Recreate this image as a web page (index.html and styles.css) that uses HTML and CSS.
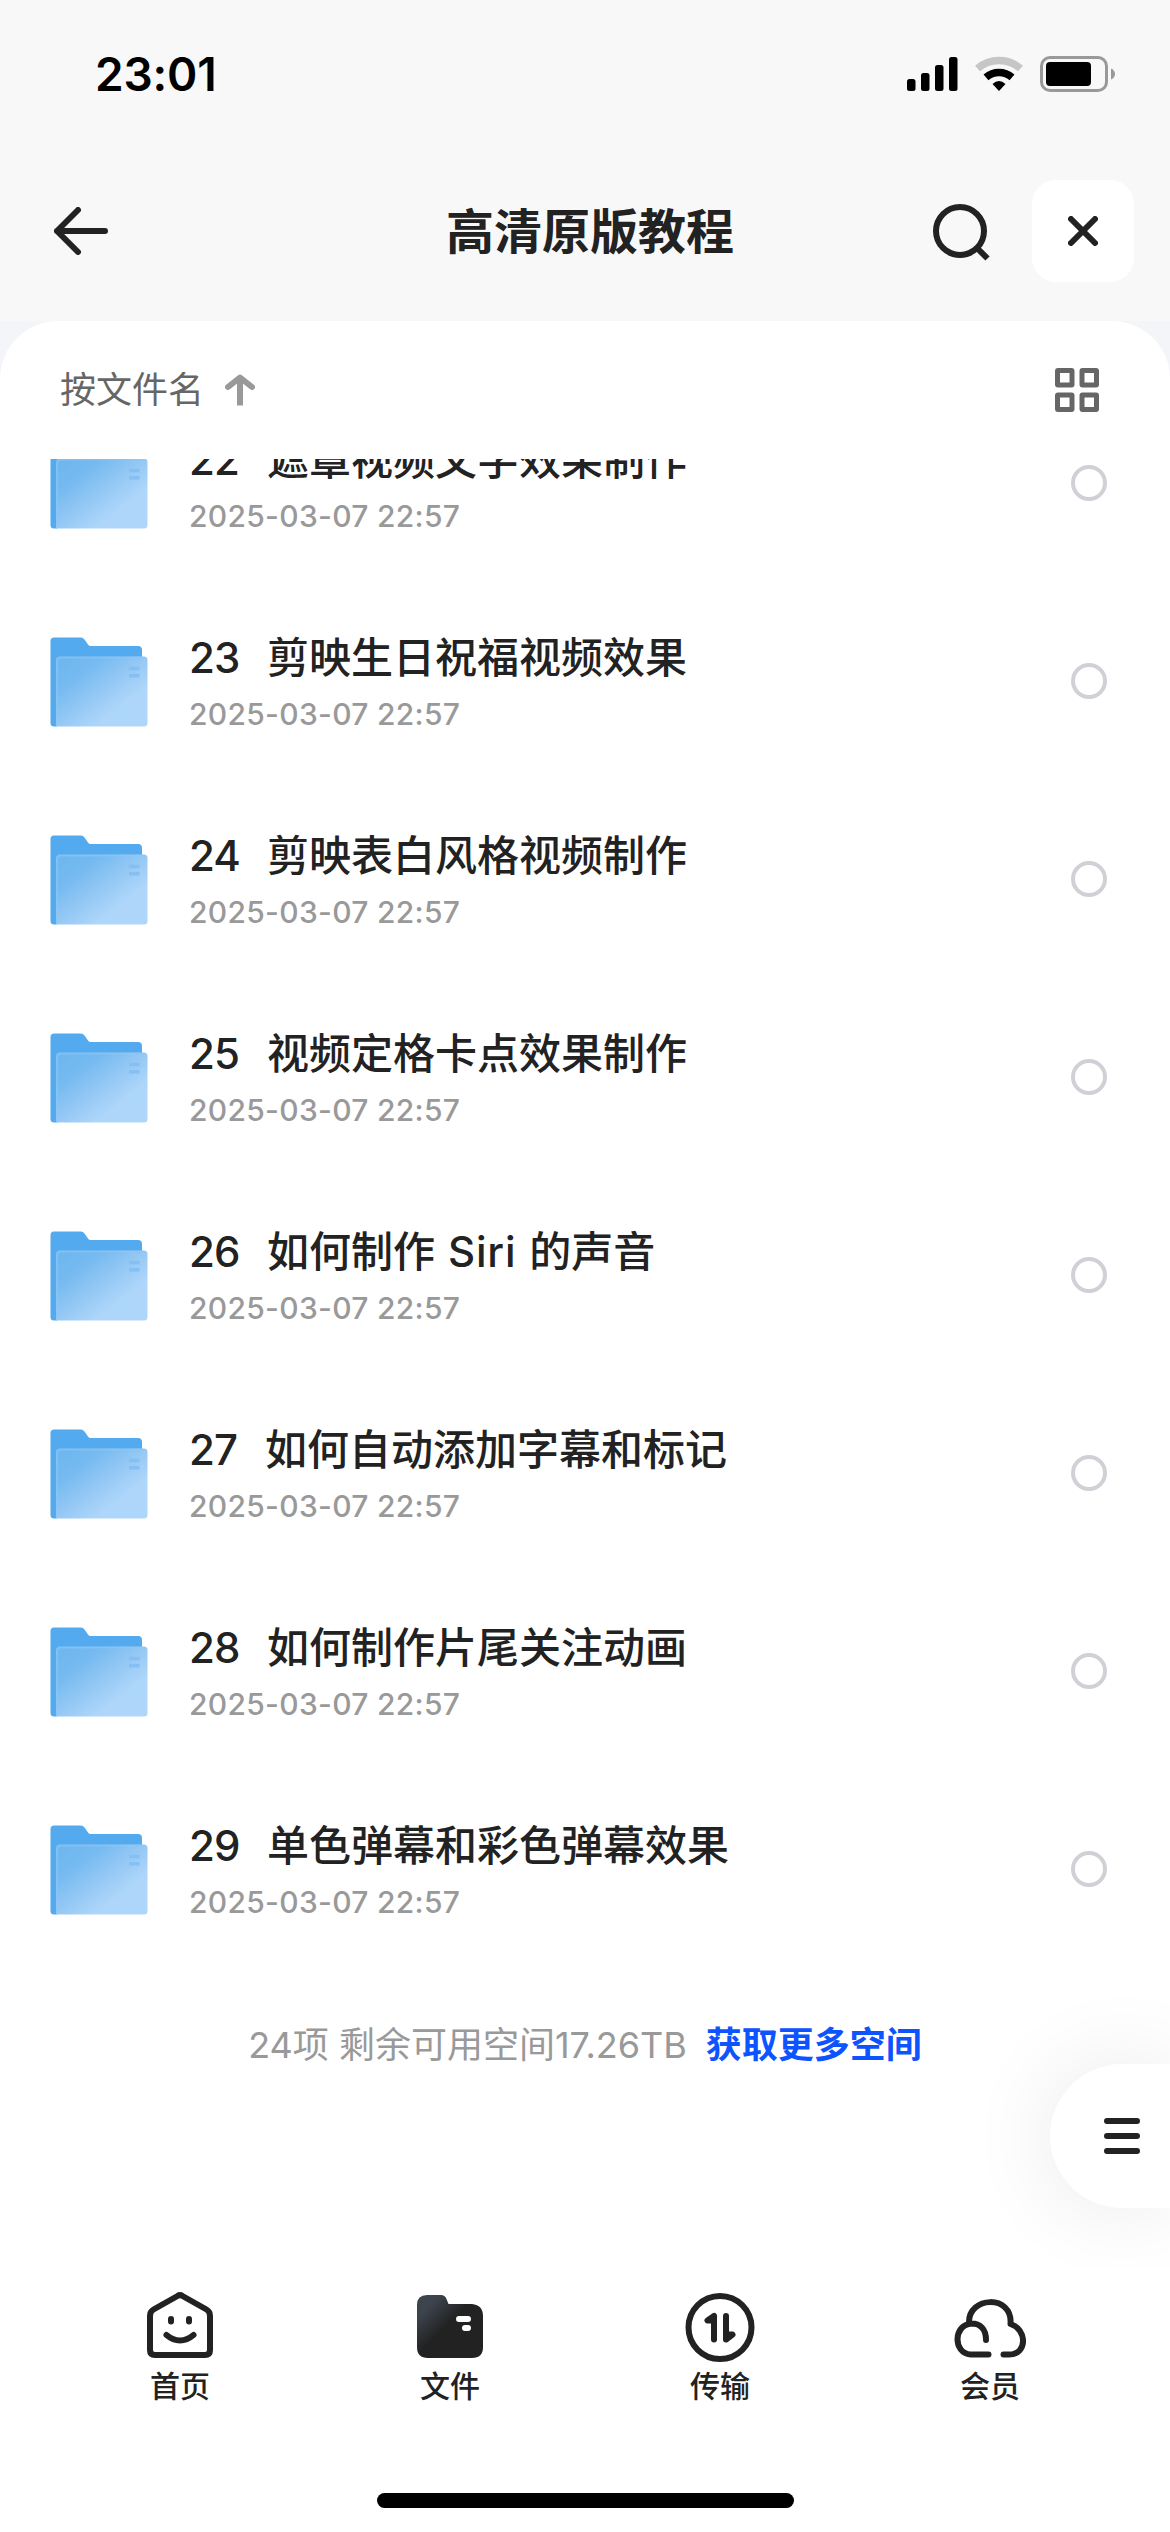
FILE: index.html
```html
<!DOCTYPE html>
<html lang="zh-CN">
<head>
<meta charset="utf-8">
<title>高清原版教程</title>
<link rel="stylesheet" href="styles.css">
</head>
<body>
<svg class="defs" aria-hidden="true">
  <defs>
    <linearGradient id="front" x1="0.1" y1="0.1" x2="0.85" y2="0.85">
      <stop offset="0" stop-color="#6fb8ef"/><stop offset="0.2" stop-color="#75baf0"/><stop offset="0.5" stop-color="#92c7f4"/><stop offset="0.82" stop-color="#aed6fa"/><stop offset="1" stop-color="#aed6fa"/>
    </linearGradient>
    <symbol id="folder" viewBox="0 0 98 90">
      <path d="M4 0.5H31q2 0 3.500 2L38 7.500q1 1.500 2.500 1.500H88q4 0 4 4V50H7V89.500H4q-3.500 0-3.500-3.500V4q0-3.500 3.500-3.500z" fill="#54aaee"/>
      <path d="M9.500 19.500H94q3.500 0 3.500 3.500V86q0 3.500-3.500 3.500H6V23q0-3.500 3.500-3.500z" fill="url(#front)"/>
      <path d="M7 88V24q0-3.500 3.500-3.500H93" fill="none" stroke="#8fc7f3" stroke-width="2" opacity=".6"/>
      <path d="M79 31.500h10.500M79 38.700h10.500" stroke="#86c0f2" stroke-width="3.500"/>
    </symbol>
  </defs>
</svg>
<div class="screen">
  <header class="status">
    <span class="time">23:01</span>
    <svg class="status-icons" viewBox="0 0 210 40">
      <g fill="#000">
        <rect x="1" y="25" width="8.500" height="12" rx="2.500"/><rect x="15" y="19" width="8.500" height="18" rx="2.500"/><rect x="29" y="11" width="8.500" height="26" rx="2.500"/><rect x="43" y="3" width="8.500" height="34" rx="2.500"/>
      </g>
      <path d="M71.500 14.500A33 33 0 0 1 114.500 14.500" fill="none" stroke="#c6c6c6" stroke-width="7.500"/>
      <path d="M80 23.300A20 20 0 0 1 106 23.300" fill="none" stroke="#000" stroke-width="7.500"/>
      <path d="M86.500 30Q93 24 99.500 30L93 37z"/>
      <rect x="135.500" y="3.500" width="65" height="33" rx="8.500" fill="none" stroke="#999" stroke-width="3"/>
      <rect x="140" y="8" width="45" height="24" rx="4" fill="#000"/>
      <path d="M205 14.500q4 2 4 5.500t-4 5.500z" fill="#999"/>
    </svg>
  </header>
  <nav class="titlebar">
    <svg class="back" viewBox="0 0 54 48"><path d="M24 3L3 24L24 45M3 24H51" fill="none" stroke="#222" stroke-width="6" stroke-linecap="round" stroke-linejoin="round"/></svg>
    <h1>高清原版教程</h1>
    <svg class="search" viewBox="0 0 60 60"><circle cx="27" cy="27" r="24" fill="none" stroke="#222" stroke-width="6"/><path d="M44 44L54.500 54.500" stroke="#222" stroke-width="6"/></svg>
    <button class="close" aria-label="关闭"><svg viewBox="0 0 30 30"><path d="M3 3L27 27M27 3L3 27" stroke="#222" stroke-width="6" stroke-linecap="round"/></svg></button>
  </nav>
  <div class="sheet-wrap">
  <main class="sheet">
    <div class="toolbar">
      <span class="sort">按文件名</span>
      <svg class="sort-arrow" viewBox="0 0 30 32"><path d="M15 4V31.500" stroke="#999" stroke-width="6"/><path d="M3 13L15 3.500L27 13" fill="none" stroke="#999" stroke-width="6" stroke-linejoin="round" stroke-linecap="round"/></svg>
      <svg class="grid" viewBox="0 0 44 44"><g fill="none" stroke="#666" stroke-width="5"><rect x="2.500" y="2.500" width="14.500" height="14.500" rx=".5"/><rect x="27" y="2.500" width="14.500" height="14.500" rx=".5"/><rect x="2.500" y="27" width="14.500" height="14.500" rx=".5"/><rect x="27" y="27" width="14.500" height="14.500" rx=".5"/></g></svg>
    </div>
    <ul class="list">
      <li><svg class="folder"><use href="#folder"/></svg><div class="info"><p class="name"><span class="num">22</span>遮罩视频文字效果制作</p><p class="date">2025-03-07 22:57</p></div><i class="check"></i></li>
      <li><svg class="folder"><use href="#folder"/></svg><div class="info"><p class="name"><span class="num">23</span>剪映生日祝福视频效果</p><p class="date">2025-03-07 22:57</p></div><i class="check"></i></li>
      <li><svg class="folder"><use href="#folder"/></svg><div class="info"><p class="name"><span class="num">24</span>剪映表白风格视频制作</p><p class="date">2025-03-07 22:57</p></div><i class="check"></i></li>
      <li><svg class="folder"><use href="#folder"/></svg><div class="info"><p class="name"><span class="num">25</span>视频定格卡点效果制作</p><p class="date">2025-03-07 22:57</p></div><i class="check"></i></li>
      <li><svg class="folder"><use href="#folder"/></svg><div class="info"><p class="name"><span class="num">26</span>如何制作<span class="latin"> Siri </span>的声音</p><p class="date">2025-03-07 22:57</p></div><i class="check"></i></li>
      <li><svg class="folder"><use href="#folder"/></svg><div class="info"><p class="name"><span class="num narrow">27</span>如何自动添加字幕和标记</p><p class="date">2025-03-07 22:57</p></div><i class="check"></i></li>
      <li><svg class="folder"><use href="#folder"/></svg><div class="info"><p class="name"><span class="num">28</span>如何制作片尾关注动画</p><p class="date">2025-03-07 22:57</p></div><i class="check"></i></li>
      <li><svg class="folder"><use href="#folder"/></svg><div class="info"><p class="name"><span class="num">29</span>单色弹幕和彩色弹幕效果</p><p class="date">2025-03-07 22:57</p></div><i class="check"></i></li>
    </ul>
    <p class="summary"><span class="count">24项 剩余可用空间17.26TB</span><a>获取更多空间</a></p>
    <button class="float" aria-label="菜单"><svg viewBox="0 0 36 36"><path d="M3 3H33M3 18H33M3 33H33" stroke="#222" stroke-width="6" stroke-linecap="round"/></svg></button>
  </main>
  </div>
  <footer class="tabs">
    <div class="tab">
      <svg viewBox="0 0 72 72"><g fill="none" stroke="#222" stroke-width="6" stroke-linecap="round" stroke-linejoin="round"><path d="M33.500 6Q36 4.300 38.500 6L62.500 19.500Q66 21.500 66 26V60Q66 65 61 65H11Q6 65 6 60V26Q6 21.500 9.500 19.500z"/><path d="M22.500 45Q29 50.500 36 50.500T49.500 45M27 29V31.500M45 29V31.500"/></g></svg>
      <span>首页</span>
    </div>
    <div class="tab">
      <svg viewBox="0 0 72 72"><defs><linearGradient id="dark" gradientUnits="userSpaceOnUse" x1="12" y1="12" x2="34" y2="34"><stop offset=".15" stop-color="#3d444d"/><stop offset="1" stop-color="#222"/></linearGradient></defs><path d="M13 5H27Q31 5 32.500 9L34.500 14H58Q69 15 69 26V57Q69 68 58 68H14Q3 68 3 57V15Q3 5 13 5z" fill="url(#dark)"/><path d="M45 29H54M51 38H54" stroke="#fff" stroke-width="6" stroke-linecap="round"/></svg>
      <span>文件</span>
    </div>
    <div class="tab">
      <svg viewBox="0 0 72 72"><circle cx="36" cy="37.500" r="31.500" fill="none" stroke="#222" stroke-width="6"/><path d="M30 26V49.500M30 26L23.500 30.500H30M42 26V49.500L48.500 44.500H42" fill="none" stroke="#222" stroke-width="6" stroke-linecap="round" stroke-linejoin="round"/></svg>
      <span>传输</span>
    </div>
    <div class="tab">
      <svg viewBox="0 0 72 72"><path d="M34.500 64.500H16.500C-1 63 -1 35 17.500 33.500C26 33.500 32 39 32 50M15 33C14 6 59 4 56.500 34C73 39 74 64.500 55 64.500H49.500" fill="none" stroke="#222" stroke-width="6" stroke-linecap="round" stroke-linejoin="round"/></svg>
      <span>会员</span>
    </div>
  </footer>
  <div class="home-bar"></div>
</div>
</body>
</html>
```
FILE: styles.css
```css
* { box-sizing: border-box; margin: 0; padding: 0; }
body { background: #f8f8f8; font-family: Inter, "Noto Sans CJK SC", sans-serif; color: #222; }
svg { display: block; flex: none; }
button { border: 0; }
.defs { position: absolute; width: 0; height: 0; }
.screen { width: 1170px; height: 2532px; display: flex; flex-direction: column; overflow: hidden; position: relative; }
.status { height: 141px; padding: 0 53px 0 95px; display: flex; justify-content: space-between; flex: none; }
.time { margin-top: 46px; font-size: 46px; line-height: 56px; font-weight: 600; letter-spacing: -0.2px; color: #000; }
.status-icons { width: 210px; height: 40px; margin: 54px 1px 0 0; }
.titlebar { height: 180px; flex: none; display: grid; grid-template-columns: 392px 487px 99px 102px; align-items: center; padding: 0 36px 0 54px; }
.back { width: 54px; height: 48px; }
h1 { text-align: center; font-size: 48px; line-height: 60px; font-weight: 700; width: 288px; padding-top: 2px; }
.search { width: 60px; height: 60px; margin-top: 5px; }
.close { width: 102px; height: 102px; border-radius: 24px; background: #fff; display: grid; place-items: center; }
.close svg { width: 30px; height: 30px; }
.sheet-wrap { background: #f4f5f8; height: 1946px; flex: none; }
.sheet { height: 100%; background: #fff; border-radius: 58px 58px 0 0; position: relative; overflow: hidden; }
.toolbar { height: 138px; padding: 0 71px 0 60px; display: flex; align-items: center; }
.sort { font-size: 36px; line-height: 44px; color: #666; }
.sort-arrow { width: 30px; height: 32px; margin-left: 21px; }
.grid { width: 44px; height: 44px; margin-left: auto; }
.list { list-style: none; height: 1509px; overflow: hidden; display: flex; flex-direction: column; justify-content: flex-end; }
.list li { height: 198px; flex: none; display: flex; align-items: center; padding: 0 63px 0 50px; }
.folder { width: 98px; height: 90px; margin-top: 2px; }
.info { margin-left: 41px; flex: 1; padding-top: 4px; }
.name { font-size: 42px; line-height: 52px; font-weight: 500; white-space: pre; }
.num { display: inline-block; width: 78px; letter-spacing: -1px; font-weight: 450; }
.num.narrow { width: 76px; }
.latin { letter-spacing: 0.8px; word-spacing: 1px; font-weight: 450; }
.date { margin-top: 10px; font-size: 30px; line-height: 40px; letter-spacing: 0.3px; font-weight: 450; color: #999; }
.check { width: 36px; height: 36px; border: 4px solid #d0d0d7; border-radius: 50%; }
.summary { height: 154px; display: flex; justify-content: center; align-items: center; gap: 19px; font-size: 36px; line-height: 44px; color: #999; }
.summary a { color: #0d53ff; font-weight: 700; }
.float { position: absolute; right: 0; top: 1743px; width: 120px; height: 144px; border-radius: 72px 0 0 72px; background: #fff; box-shadow: 0 0 90px rgba(0,0,0,.09); padding-left: 54px; }
.float svg { width: 36px; height: 36px; }
.tabs { background: #fff; height: 265px; flex: 1; padding: 23px 45px 0; display: grid; grid-template-columns: repeat(4, 1fr); }
.tab { display: flex; flex-direction: column; align-items: center; gap: 4px; font-size: 30px; line-height: 40px; font-weight: 500; }
.tab svg { width: 72px; height: 72px; }
.home-bar { position: absolute; left: 377px; top: 2493px; width: 417px; height: 15px; border-radius: 8px; background: #000; }
```
